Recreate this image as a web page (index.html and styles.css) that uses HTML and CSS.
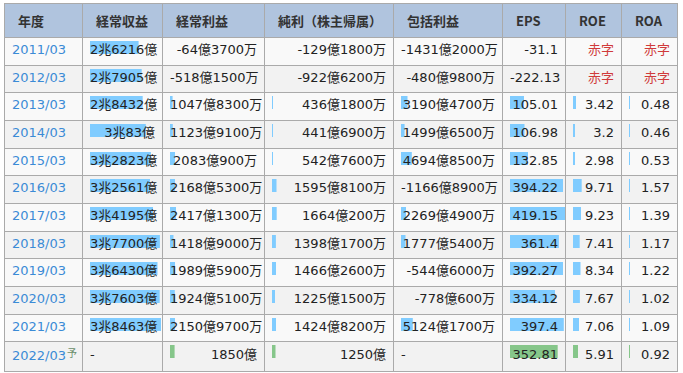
FILE: index.html
```html
<!DOCTYPE html>
<html lang="ja">
<head>
<meta charset="utf-8">
<title>業績推移</title>
<link rel="stylesheet" href="styles.css">
</head>
<body>
<table class="perf">
  <colgroup>
    <col class="c-year"><col class="c-rev"><col class="c-ord"><col class="c-net"><col class="c-com"><col class="c-eps"><col class="c-roe"><col class="c-roa">
  </colgroup>
  <thead>
    <tr><th>年度</th><th>経常収益</th><th>経常利益</th><th>純利（株主帰属）</th><th>包括利益</th><th>EPS</th><th>ROE</th><th>ROA</th></tr>
  </thead>
  <tbody>
    <tr><td class="yr"><a href="#">2011/03</a></td><td class="bar" style="--w:48.6px">2兆6216億</td><td>-64億3700万</td><td>-129億1800万</td><td>-1431億2000万</td><td>-31.1</td><td class="loss">赤字</td><td class="loss">赤字</td></tr>
    <tr><td class="yr"><a href="#">2012/03</a></td><td class="bar" style="--w:51.7px">2兆7905億</td><td>-518億1500万</td><td>-922億6200万</td><td>-480億9800万</td><td>-222.13</td><td class="loss">赤字</td><td class="loss">赤字</td></tr>
    <tr><td class="yr"><a href="#">2013/03</a></td><td class="bar" style="--w:52.7px">2兆8432億</td><td class="bar" style="--w:2.6px">1047億8300万</td><td class="bar" style="--w:1px">436億1800万</td><td class="bar" style="--w:6.5px">3190億4700万</td><td class="bar" style="--w:14.2px">105.01</td><td class="bar" style="--w:3px">3.42</td><td class="bar" style="--w:1px">0.48</td></tr>
    <tr><td class="yr"><a href="#">2014/03</a></td><td class="bar" style="--w:55.8px">3兆83億</td><td class="bar" style="--w:2.8px">1123億9100万</td><td class="bar" style="--w:1px">441億6900万</td><td class="bar" style="--w:3.6px">1499億6500万</td><td class="bar" style="--w:14.5px">106.98</td><td class="bar" style="--w:2px">3.2</td><td class="bar" style="--w:1px">0.46</td></tr>
    <tr><td class="yr"><a href="#">2015/03</a></td><td class="bar" style="--w:60.9px">3兆2823億</td><td class="bar" style="--w:5.2px">2083億900万</td><td class="bar" style="--w:1px">542億7600万</td><td class="bar" style="--w:10.8px">4694億8500万</td><td class="bar" style="--w:18px">132.85</td><td class="bar" style="--w:2px">2.98</td><td class="bar" style="--w:1px">0.53</td></tr>
    <tr><td class="yr"><a href="#">2016/03</a></td><td class="bar" style="--w:60.4px">3兆2561億</td><td class="bar" style="--w:5.4px">2168億5300万</td><td class="bar" style="--w:4.5px">1595億8100万</td><td>-1166億8900万</td><td class="bar" style="--w:53.3px">394.22</td><td class="bar" style="--w:8.7px">9.71</td><td class="bar" style="--w:1px">1.57</td></tr>
    <tr><td class="yr"><a href="#">2017/03</a></td><td class="bar" style="--w:63.4px">3兆4195億</td><td class="bar" style="--w:6px">2417億1300万</td><td class="bar" style="--w:4.7px">1664億200万</td><td class="bar" style="--w:5.2px">2269億4900万</td><td class="bar" style="--w:56.7px">419.15</td><td class="bar" style="--w:8.3px">9.23</td><td class="bar" style="--w:1px">1.39</td></tr>
    <tr><td class="yr"><a href="#">2018/03</a></td><td class="bar" style="--w:69.9px">3兆7700億</td><td class="bar" style="--w:3.5px">1418億9000万</td><td class="bar" style="--w:3.9px">1398億1700万</td><td class="bar" style="--w:4.5px">1777億5400万</td><td class="bar" style="--w:48.9px">361.4</td><td class="bar" style="--w:6.7px">7.41</td><td class="bar" style="--w:1px">1.17</td></tr>
    <tr><td class="yr"><a href="#">2019/03</a></td><td class="bar" style="--w:67.5px">3兆6430億</td><td class="bar" style="--w:5px">1989億5900万</td><td class="bar" style="--w:4.1px">1466億2600万</td><td>-544億6000万</td><td class="bar" style="--w:53.1px">392.27</td><td class="bar" style="--w:7.5px">8.34</td><td class="bar" style="--w:1px">1.22</td></tr>
    <tr><td class="yr"><a href="#">2020/03</a></td><td class="bar" style="--w:69.7px">3兆7603億</td><td class="bar" style="--w:4.8px">1924億5100万</td><td class="bar" style="--w:3.4px">1225億1500万</td><td>-778億600万</td><td class="bar" style="--w:45.2px">334.12</td><td class="bar" style="--w:6.9px">7.67</td><td class="bar" style="--w:1px">1.02</td></tr>
    <tr><td class="yr"><a href="#">2021/03</a></td><td class="bar" style="--w:71.3px">3兆8463億</td><td class="bar" style="--w:5.4px">2150億9700万</td><td class="bar" style="--w:4px">1424億8200万</td><td class="bar" style="--w:11.8px">5124億1700万</td><td class="bar" style="--w:53.8px">397.4</td><td class="bar" style="--w:6.4px">7.06</td><td class="bar" style="--w:1px">1.09</td></tr>
    <tr><td class="yr"><a href="#">2022/03</a><span class="fc-mark">予</span></td><td class="none">-</td><td class="bar fc" style="--w:4.6px">1850億</td><td class="bar fc" style="--w:3.5px">1250億</td><td class="none">-</td><td class="bar fc" style="--w:47.7px">352.81</td><td class="bar fc" style="--w:5.3px">5.91</td><td class="bar fc" style="--w:1px">0.92</td></tr>
  </tbody>
</table>
</body>
</html>
```
FILE: styles.css
```css
html, body {
  margin: 0;
  padding: 0;
  background: #fff;
}

.perf {
  margin: 3px 0 0 4px;
  border-collapse: collapse;
  table-layout: fixed;
  width: 674px;
  font-family: "DejaVu Sans", "Noto Sans CJK JP", sans-serif;
  font-size: 13px;
  color: #222;
}

.c-year { width: 78px; }
.c-rev { width: 80px; }
.c-ord { width: 102px; }
.c-net { width: 129px; }
.c-com { width: 109px; }
.c-eps { width: 63px; }
.c-roe { width: 56px; }
.c-roa { width: 56px; }

.perf th,
.perf td {
  border: 1px solid #aaa;
  white-space: nowrap;
  overflow: hidden;
}

.perf th {
  background: #b0c4de;
  color: #333;
  font-weight: bold;
  text-align: left;
  padding: 0 0 0 13px;
  height: 33px;
  line-height: 33px;
  font-family: "Noto Sans CJK JP", "DejaVu Sans", sans-serif;
}

.perf td {
  padding: 2px 7px 5.67px;
  line-height: 19px;
  text-align: right;
}

.perf tbody tr:nth-child(odd) { background: #f9f9f9; }
.perf tbody tr:nth-child(even) { background: #f2f2f2; }

.perf td.yr,
.perf td.none {
  text-align: left;
}

.yr a {
  color: #3b8bd6;
  text-decoration: none;
}

.fc-mark {
  font-size: 10px;
  color: #6b8e6b;
  vertical-align: 3px;
  margin-left: 1px;
}

.loss {
  color: #d03a3a;
}

.bar {
  --c: #80ccff;
  background-image: linear-gradient(var(--c), var(--c));
  background-repeat: no-repeat;
  background-position: 7px 3px;
  background-size: var(--w) 13px;
}

.bar.fc {
  --c: #86c68a;
}
```
